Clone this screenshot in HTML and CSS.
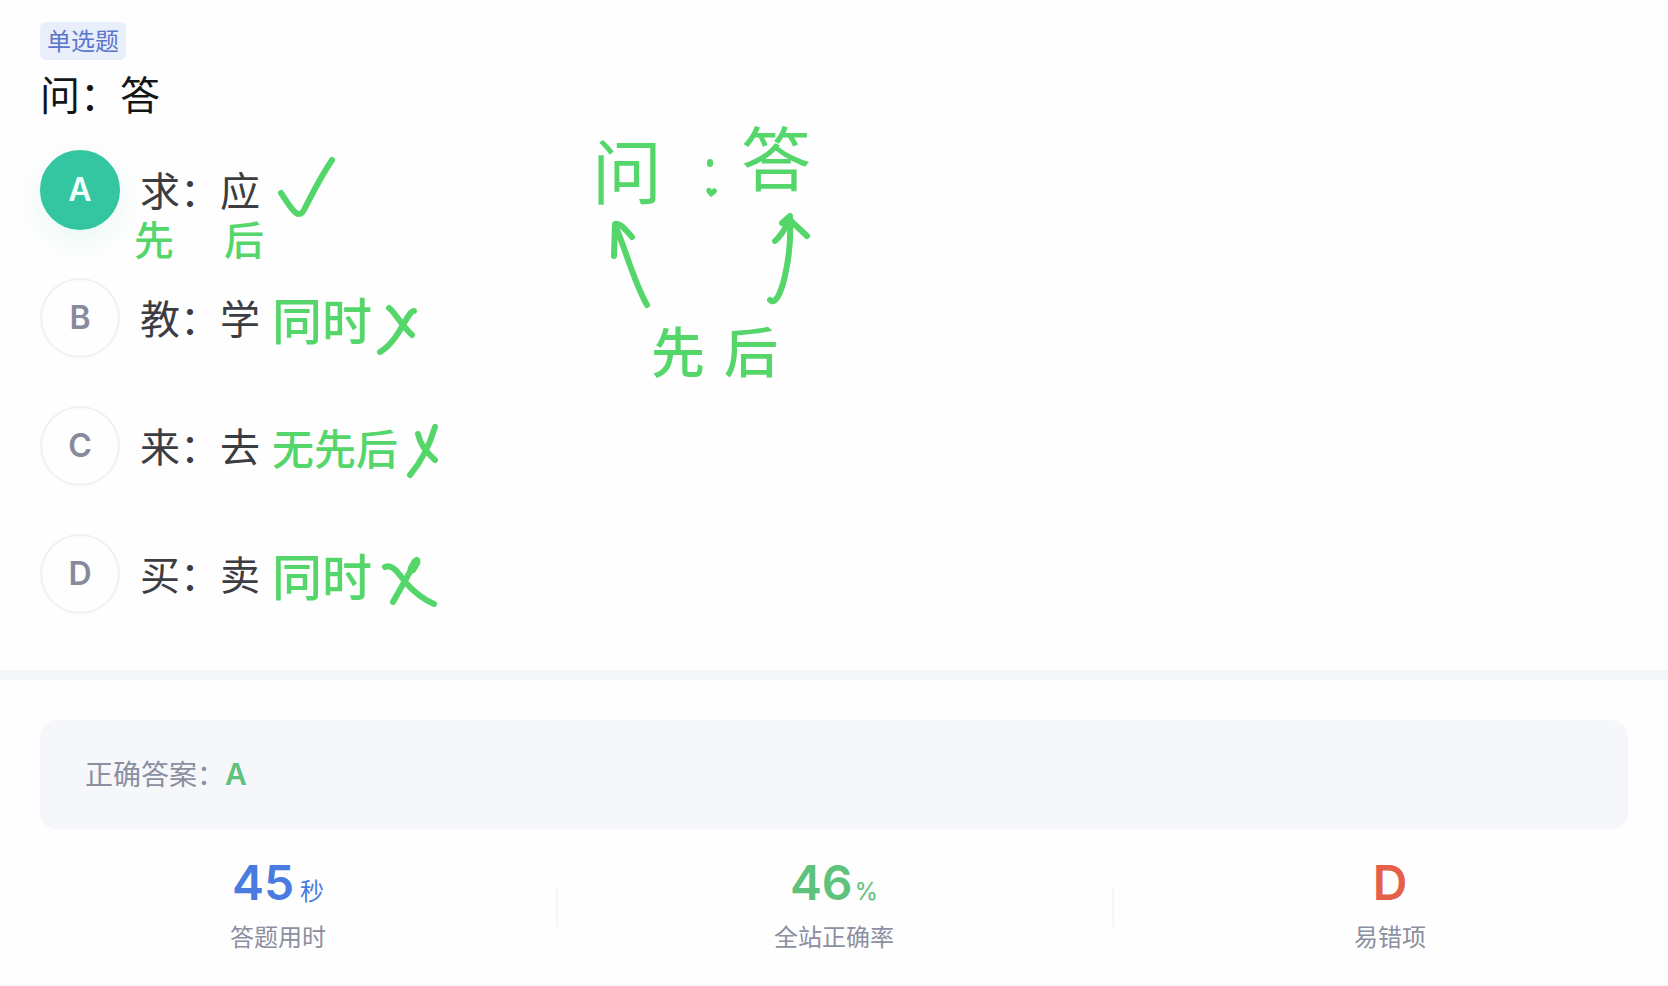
FILE: index.html
```html
<!DOCTYPE html>
<html lang="zh-CN">
<head>
<meta charset="utf-8">
<meta name="viewport" content="width=device-width, initial-scale=1">
<title>单选题</title>
<link rel="stylesheet" href="styles.css">
</head>
<body>
<main class="page">
  <section class="question">
    <span class="tag">单选题</span>
    <h1 class="stem">问：答</h1>
    <ul class="options">
      <li class="option">
        <button class="choice choice-selected" type="button" aria-pressed="true"><span class="badge">A</span><span class="choice-text">求：应</span></button>
        <span class="note">
          <svg class="mark" width="64" height="64" viewBox="0 6 64 64" aria-hidden="true"><path d="M9 35 C14 42 18 50 24 55 C27 57 30 56 32 52 C41 34 50 17 60 2"/></svg>
        </span>
        <span class="under-note"><span>先</span><span>后</span></span>
      </li>
      <li class="option">
        <button class="choice" type="button" aria-pressed="false"><span class="badge">B</span><span class="choice-text">教：学</span></button>
        <span class="note note-large">同时
          <svg class="mark" width="42" height="54" viewBox="0 0 42 54" aria-hidden="true"><path d="M9 8 C14 11 21 25 32 35 M34 11 C27 11 20 40 0 52"/></svg>
        </span>
      </li>
      <li class="option">
        <button class="choice" type="button" aria-pressed="false"><span class="badge">C</span><span class="choice-text">来：去</span></button>
        <span class="note">无先后
          <svg class="mark" width="42" height="54" viewBox="0 0 42 54" aria-hidden="true"><path d="M12 9 C14 19 21 28 29 35 M29 2 C24 19 15 37 4 50"/></svg>
        </span>
      </li>
      <li class="option">
        <button class="choice" type="button" aria-pressed="false"><span class="badge">D</span><span class="choice-text">买：卖</span></button>
        <span class="note note-large">同时
          <svg class="mark" width="60" height="54" viewBox="0 0 60 54" aria-hidden="true"><path d="M5 11 C13 7 19 19 27 28 C36 38 45 44 54 48 M37 4 L34 9 C28 19 21 32 13 46"/><path class="mark-heavy" d="M36 6 L32 13"/></svg>
        </span>
      </li>
    </ul>
    <svg class="sketch" width="240" height="290" viewBox="0 0 240 290">
      <text class="sketch-title" x="2" y="91">问</text>
      <text class="sketch-title" x="151" y="78">答</text>
      <text class="sketch-word" x="61" y="265">先</text>
      <text class="sketch-word" x="134" y="265">后</text>
      <path d="M120 54 L120 56"/>
      <path class="dot" d="M121 89 C116 85 115 81 118 80 C120 79 121 81 122 82 C123 79 127 80 127 83 C127 85 124 87 121 89 Z"/>
      <path d="M57 197 C43 172 36 142 25 117 M24 148 L25 116 C29 114 35 121 42 129"/>
      <path d="M180 192 C190 202 202 150 200 110 M185 133 C190 129 195 121 200 112 L217 128 M192 115 L200 108"/>
    </svg>
  </section>

  <section class="result">
    <p class="answer">正确答案：<strong class="answer-key">A</strong></p>
    <dl class="stats">
      <div class="stat">
        <dt>答题用时</dt>
        <dd class="blue">45<small class="unit unit-spaced">秒</small></dd>
      </div>
      <div class="stat">
        <dt>全站正确率</dt>
        <dd class="green">46<small class="unit">%</small></dd>
      </div>
      <div class="stat">
        <dt>易错项</dt>
        <dd class="red">D</dd>
      </div>
    </dl>
  </section>
</main>
</body>
</html>
```

FILE: styles.css
```css
* {
  box-sizing: border-box;
}

body {
  margin: 0;
  background: #fefefe;
  color: #141517;
  font-family: Inter, "Noto Sans CJK SC", sans-serif;
}

.question {
  position: relative;
  padding: 22px 40px 56px;
  border-bottom: 10px solid #f4f6fa;
}

.tag {
  display: block;
  width: fit-content;
  padding: 1px 7px 0;
  border-radius: 6px;
  background: #e9eefb;
  color: #5b76cc;
  font-size: 24px;
  line-height: 37px;
}

.stem {
  margin: 8px 0 26px;
  font-size: 40px;
  font-weight: 400;
  line-height: 56px;
}

.options {
  display: grid;
  gap: 48px;
  margin: 0;
  padding: 0;
  list-style: none;
}

.option {
  position: relative;
  display: flex;
  align-items: center;
  gap: 12px;
  height: 80px;
}

.choice {
  display: flex;
  align-items: center;
  gap: 20px;
  padding: 0;
  border: 0;
  background: none;
  color: #3b3d42;
  font: inherit;
  font-size: 40px;
  line-height: 56px;
  cursor: pointer;
}

.choice-text {
  padding-top: 4px;
}

.badge {
  display: grid;
  place-items: center;
  width: 80px;
  height: 80px;
  border: 2px solid #f0f1f3;
  border-radius: 50%;
  color: #888a9c;
  font-size: 32px;
  font-weight: 600;
}

.choice-selected .badge {
  border-color: #33c6a0;
  background: #33c6a0;
  box-shadow: 0 10px 30px #33c6a01c;
  color: #f2fffb;
}

.note {
  display: flex;
  align-items: center;
  gap: 8px;
  padding-top: 8px;
  color: #55d66b;
  font-size: 42px;
  font-weight: 500;
  line-height: 60px;
}

.note-large {
  font-size: 50px;
}

.mark,
.sketch {
  overflow: visible;
  fill: none;
  stroke: #55d66b;
  stroke-width: 6;
  stroke-linecap: round;
  stroke-linejoin: round;
}

.mark {
  margin-top: 4px;
}

.note-large .mark {
  margin-top: 10px;
}

.mark-heavy {
  stroke-width: 9;
}

.under-note {
  position: absolute;
  top: 67px;
  left: 94px;
  display: flex;
  gap: 50px;
  color: #55d66b;
  font-size: 40px;
  font-weight: 500;
  line-height: 48px;
}

.sketch {
  position: absolute;
  top: 108px;
  left: 590px;
}

.sketch text,
.dot {
  fill: #55d66b;
  stroke: none;
}

.sketch-title {
  font-size: 70px;
  font-weight: 400;
}

.sketch-word {
  font-size: 54px;
  font-weight: 500;
}

.answer {
  margin: 40px 40px 0;
  padding: 30px 45px;
  border-radius: 16px;
  background: #f5f7fb;
  color: #8c8f9f;
  font-size: 28px;
  line-height: 48px;
}

.answer-key {
  color: #5fc27c;
  font-size: 30px;
  font-weight: 600;
}

.stats {
  display: grid;
  grid-template-columns: repeat(3, 1fr);
  margin: 0;
  padding: 24px 0 30px;
  border-bottom: 2px solid #f5f6f7;
}

.stat {
  position: relative;
  display: flex;
  flex-direction: column-reverse;
  gap: 8px;
  text-align: center;
}

.stat + .stat::before {
  content: "";
  position: absolute;
  top: 34px;
  left: 0;
  width: 2px;
  height: 40px;
  background: #f4f6f9;
}

.stat dt {
  color: #8c8f9f;
  font-size: 24px;
  line-height: 34px;
}

.stat dd {
  margin: 0;
  font-size: 48px;
  font-weight: 600;
  line-height: 60px;
}

.unit {
  margin-left: 2px;
  font-size: 24px;
  font-weight: 400;
  line-height: 24px;
}

.unit-spaced {
  margin-left: 6px;
}

.blue {
  color: #4a7be0;
}

.green {
  color: #5fc27c;
}

.red {
  color: #e5604b;
}
```
